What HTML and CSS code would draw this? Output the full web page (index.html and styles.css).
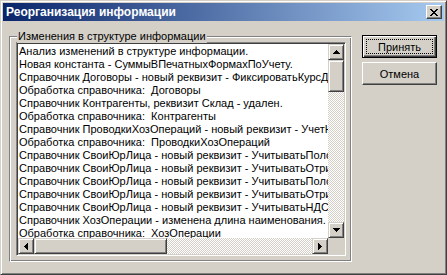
FILE: index.html
```html
<!DOCTYPE html>
<html lang="ru">
<head>
    <meta charset="UTF-8">
    <title>Реорганизация информации</title>
    <link rel="stylesheet" href="styles.css">
</head>
<body>

    <div class="window">
        <div class="titlebar">
            <span class="title">Реорганизация информации</span>
            <span class="close">
                <svg width="8" height="7" viewBox="0 0 8 7">
                    <path d="M0 0h2v1h-2zM6 0h2v1h-2zM1 1h2v1h-2zM5 1h2v1h-2zM2 2h4v1h-4zM3 3h2v1h-2zM2 4h4v1h-4zM1 5h2v1h-2zM5 5h2v1h-2zM0 6h2v1h-2zM6 6h2v1h-2z" fill="#000"/>
                </svg>
            </span>
        </div>

        <div class="content">
            <div class="group">
                <span class="group-label">Изменения в структуре информации</span>
                <div class="listbox">
                    <ul class="rows">
                        <li>Анализ изменений в структуре информации.</li>
                        <li>Новая константа - СуммыВПечатныхФормахПоУчету.</li>
                        <li>Справочник Договоры - новый реквизит - ФиксироватьКурсДоговора</li>
                        <li>Обработка справочника:&nbsp; Договоры</li>
                        <li>Справочник Контрагенты, реквизит Склад - удален.</li>
                        <li>Обработка справочника:&nbsp; Контрагенты</li>
                        <li>Справочник ПроводкиХозОпераций - новый реквизит - УчетНДС</li>
                        <li>Обработка справочника:&nbsp; ПроводкиХозОпераций</li>
                        <li>Справочник СвоиЮрЛица - новый реквизит - УчитыватьПоложительные</li>
                        <li>Справочник СвоиЮрЛица - новый реквизит - УчитыватьОтрицательные</li>
                        <li>Справочник СвоиЮрЛица - новый реквизит - УчитыватьПоложительные</li>
                        <li>Справочник СвоиЮрЛица - новый реквизит - УчитыватьОтрицательные</li>
                        <li>Справочник СвоиЮрЛица - новый реквизит - УчитыватьНДС</li>
                        <li>Справочник ХозОперации - изменена длина наименования.</li>
                        <li>Обработка справочника:&nbsp; ХозОперации</li>
                    </ul>
                    <div class="vscroll">
                        <span class="sb-btn">
                            <svg width="7" height="4" viewBox="0 0 7 4"><path d="M3 0h1v1h1v1h1v1h1v1h-7v-1h1v-1h1v-1h1z" fill="#000"/></svg>
                        </span>
                        <span class="sb-thumb v-thumb"></span>
                        <span class="sb-track"></span>
                        <span class="sb-btn">
                            <svg width="7" height="4" viewBox="0 0 7 4"><path d="M0 0h7v1h-1v1h-1v1h-1v1h-1v-1h-1v-1h-1v-1h-1z" fill="#000"/></svg>
                        </span>
                    </div>
                    <div class="hscroll">
                        <span class="sb-btn">
                            <svg width="4" height="7" viewBox="0 0 4 7"><path d="M3 0h1v7h-1v-1h-1v-1h-1v-1h-1v-1h1v-1h1v-1h1z" fill="#000"/></svg>
                        </span>
                        <span class="sb-thumb h-thumb"></span>
                        <span class="sb-track"></span>
                        <span class="sb-btn">
                            <svg width="4" height="7" viewBox="0 0 4 7"><path d="M0 0h1v1h1v1h1v1h1v1h-1v1h-1v1h-1v1h-1z" fill="#000"/></svg>
                        </span>
                    </div>
                    <div class="corner"></div>
                </div>
            </div>

            <div class="buttons">
                <button class="btn btn-default"><span class="focus">Принять</span></button>
                <button class="btn">Отмена</button>
            </div>
        </div>
    </div>

</body>
</html>
```

FILE: styles.css
```css
body {
    margin: 0;
    background-color: #d4d0c8;
    font-family: "Liberation Sans", Arial, sans-serif;
    font-size: 11px;
    color: #000;
}

.window {
    box-sizing: border-box;
    width: 447px;
    height: 275px;
    padding: 1px;
    background-color: #d4d0c8;
    border: 1px solid;
    border-color: #d4d0c8 #404040 #404040 #d4d0c8;
    box-shadow: inset 1px 1px #fff, inset -1px -1px #808080;
}

.titlebar {
    display: flex;
    align-items: center;
    justify-content: space-between;
    height: 18px;
    padding: 0 2px 0 2px;
    margin: 1px 1px 0 1px;
    background: linear-gradient(to right, #0a246a, #a6caf0);
}

.title {
    color: #fff;
    font-weight: bold;
    font-size: 12px;
    padding-left: 1px;
}

.close {
    box-sizing: border-box;
    display: flex;
    align-items: center;
    justify-content: center;
    width: 16px;
    height: 14px;
    background-color: #d4d0c8;
    border: 1px solid;
    border-color: #fff #404040 #404040 #fff;
    box-shadow: inset -1px -1px #808080;
}

.content {
    display: flex;
    align-items: flex-start;
    gap: 10px;
    padding-left: 7px;
}

/* рамка группы */
.group {
    position: relative;
    box-sizing: border-box;
    width: 343px;
    height: 226px;
    margin-top: 15px;
    padding: 5px 0 0 6px;
    border: 1px solid;
    border-color: #808080 #fff #fff #808080;
    box-shadow: inset 1px 1px #fff, inset -1px -1px #808080;
}

.group-label {
    position: absolute;
    left: 7px;
    top: -8px;
    padding: 0 1px;
    line-height: 14px;
    background-color: #d4d0c8;
}

.listbox {
    box-sizing: border-box;
    display: grid;
    grid-template-columns: 310px 16px;
    grid-template-rows: 194px 16px;
    width: 330px;
    height: 214px;
    border: 1px solid;
    border-color: #808080 #fff #fff #808080;
    box-shadow: inset 1px 1px #404040, inset -1px -1px #d4d0c8;
    padding: 1px;
}

.rows {
    list-style-type: none;
    margin: 0;
    padding: 1px 0 0 1px;
    background-color: #fff;
    overflow: hidden;
}

.rows li {
    white-space: nowrap;
    line-height: 13px;
    height: 13px;
}

.vscroll {
    display: flex;
    flex-direction: column;
}

.hscroll {
    display: flex;
}

.sb-btn,
.sb-thumb {
    box-sizing: border-box;
    display: flex;
    align-items: center;
    justify-content: center;
    flex: none;
    width: 16px;
    height: 16px;
    background-color: #d4d0c8;
    border: 1px solid;
    border-color: #d4d0c8 #404040 #404040 #d4d0c8;
    box-shadow: inset 1px 1px #fff, inset -1px -1px #808080;
}

.v-thumb {
    height: 32px;
}

.h-thumb {
    width: 133px;
}

.sb-track {
    flex: 1;
    background: repeating-conic-gradient(#fff 0 25%, #d4d0c8 0 50%) 0 0 / 2px 2px;
}

.corner {
    background-color: #d4d0c8;
}

.buttons {
    display: flex;
    flex-direction: column;
    gap: 4px;
    margin-top: 14px;
}

.btn {
    box-sizing: border-box;
    width: 75px;
    height: 23px;
    padding: 0;
    font-family: "Liberation Sans", Arial, sans-serif;
    font-size: 11px;
    color: #000;
    background-color: #d4d0c8;
    border: 1px solid;
    border-color: #fff #404040 #404040 #fff;
    box-shadow: inset -1px -1px #808080;
}

.btn-default {
    display: flex;
    padding: 3px;
    border-color: #000;
    box-shadow: inset 1px 1px #fff, inset -1px -1px #404040, inset -2px -2px #808080;
}

.focus {
    flex: 1;
    display: flex;
    align-items: center;
    justify-content: center;
    border: 1px dotted #000;
}
```
